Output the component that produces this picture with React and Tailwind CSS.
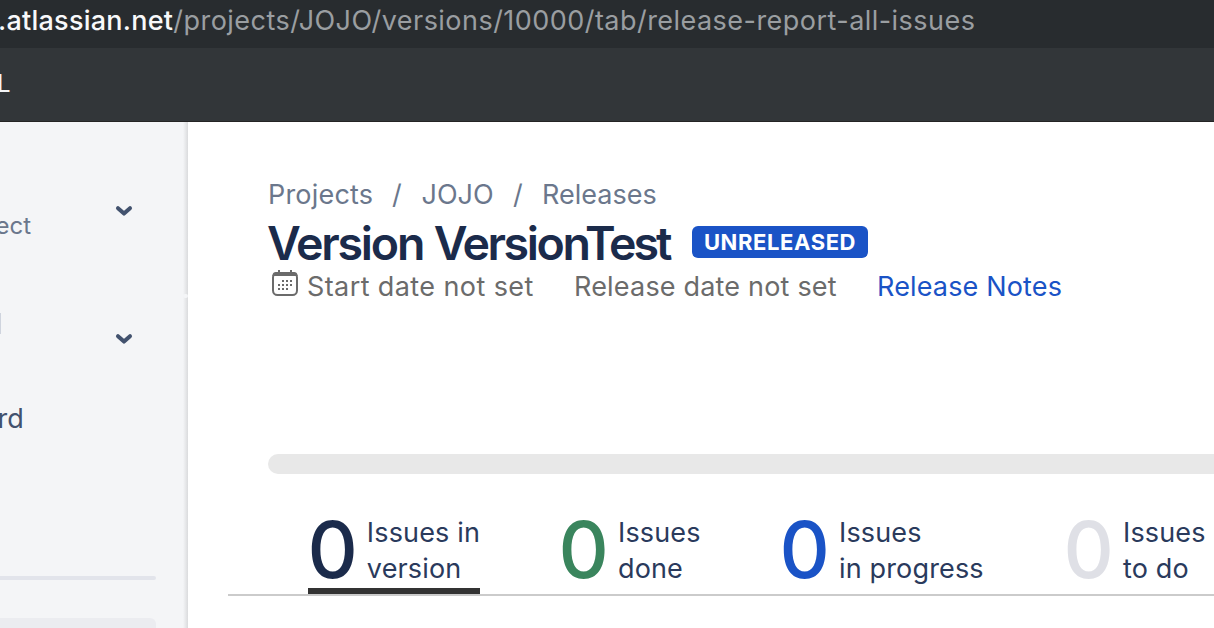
const ChevronDown = () => (
  <svg className="block h-[12px] w-[18px]" viewBox="0 0 18 12" fill="none">
    <path d="M3 3.2 9 8.6 15 3.2" stroke="#42526e" strokeWidth="4" strokeLinecap="round" strokeLinejoin="round" />
  </svg>
);

const CalendarIcon = () => (
  <svg className="block h-[28px] w-[28px] shrink-0" viewBox="0 0 28 28" fill="none">
    <rect x="2" y="4" width="24" height="22" rx="4.5" stroke="#6b6b6b" strokeWidth="2" />
    <path d="M1.5 7V6A3.5 3.5 0 0 1 5 3H23A3.5 3.5 0 0 1 26.5 6V7Z" fill="#6b6b6b" />
    <path d="M8 1V4M20 1V4" stroke="#6b6b6b" strokeWidth="2" />
    <path
      d="M11 12h2M15 12h2M19 12h2M7 16h2M11 16h2M15 16h2M19 16h2M7 20h2M11 20h2M15 20h2"
      stroke="#6b6b6b"
      strokeWidth="2"
    />
  </svg>
);

const tabs = [
  { first: "Issues in", second: "version", width: "w-[172px]", gap: "mr-[79px]", color: "text-[#1b2b4b]", active: true },
  { first: "Issues", second: "done", width: "w-[142px]", gap: "mr-[79px]", color: "text-[#3a855d]" },
  { first: "Issues", second: "in progress", width: "w-[204px]", gap: "mr-[80px]", color: "text-[#1a53c6]" },
  { first: "Issues", second: "to do", width: "w-[142px]", gap: "mr-0", color: "text-[#dfe0e6]" },
];

export default function App() {
  return (
    <div className="flex h-[628px] w-[1214px] flex-col overflow-hidden bg-white font-['Inter',sans-serif] text-[27px] leading-[36px] whitespace-nowrap">
      <div className="flex h-[48px] shrink-0 items-start bg-[#282c2f] pt-[3px]">
        <span className="-ml-[2px] font-[450] tracking-[0.25px] text-[#f8f9fa]">.atlassian.net</span>
        <span className="tracking-[0.46px] text-[#9a9ea1]">/projects/JOJO/versions/10000/tab/release-report-all-issues</span>
      </div>
      <header className="flex h-[74px] shrink-0 items-start border-b border-[#242424] bg-[#323639] pt-[19px]">
        <span className="-ml-[3px] text-[24px] leading-[34px] text-[#f4f5f7]">L</span>
      </header>

      <div className="flex min-h-0 flex-1">
        <aside className="relative flex w-[188px] shrink-0 flex-col overflow-hidden bg-[#f4f5f7]">
          <div className="flex h-[160px] shrink-0 items-start justify-between pr-[55px]">
            <span className="-ml-[4.5px] pt-[86px] text-[24px] text-[#6b778c]">ect</span>
            <div className="pt-[83px]"><ChevronDown /></div>
          </div>
          <div className="flex h-[114px] shrink-0 items-start justify-between pr-[55px]">
            <div className="mt-[31px] h-[21px] w-px bg-[#cfd4de]" />
            <div className="pt-[51px]"><ChevronDown /></div>
          </div>
          <div className="h-[180px] shrink-0">
            <span className="-ml-[2.5px] block pt-[5px] text-[#42526e]">rd</span>
          </div>
          <div className="h-[4px] w-[156px] shrink-0 rounded-r-[2px] bg-[#e2e4eb]" />
          <div className="mt-[38px] h-[30px] w-[156px] shrink-0 rounded-tr-[6px] bg-[#ebecf0]" />
          <div className="absolute inset-y-0 right-0 w-[5px] bg-linear-to-r from-[#f4f5f7] to-[#dadbdd]" />
          <div className="absolute top-[172px] right-0 h-[4px] w-[5px] rounded-[2px] bg-[#f4f5f7]" />
        </aside>

        <main className="flex min-w-0 flex-1 flex-col overflow-hidden pt-[55px]">
          <nav className="flex h-[35px] shrink-0 pl-[80px] text-[#6b778c]">
            <span className="w-[124px] tracking-[0.2px]">Projects</span>
            <span className="w-[29.5px]">/</span>
            <span className="w-[91.5px]">JOJO</span>
            <span className="w-[29px]">/</span>
            <span>Releases</span>
          </nav>
          <div className="flex h-[57px] shrink-0 items-start pl-[79px]">
            <h1 className="w-[425px] pt-[3px] text-[46.5px] leading-[56px] font-[590] tracking-[-2.2px] text-[#1b2b4b]">
              Version <span className="ml-[1px] tracking-[-2.4px]">Version</span>
              <span className="-ml-[3.5px] tracking-[-3px]">Test</span>
            </h1>
            <span className="mt-[14px] flex h-[32px] w-[176px] items-center justify-center rounded-[6px] bg-[#1a53c6] text-[22px] leading-[32px] font-bold tracking-[0.6px] text-white">
              UNRELEASED
            </span>
          </div>
          <div className="flex h-[36px] shrink-0 items-start pl-[83px] text-[#6b6b6b]">
            <CalendarIcon />
            <span className="ml-[8px] w-[267px] tracking-[0.4px]">Start date not set</span>
            <span className="w-[303px] tracking-[0.19px]">Release date not set</span>
            <a className="tracking-[0.15px] text-[#1a53c6]">Release Notes</a>
          </div>

          <div className="mt-[149px] ml-[80px] h-[20px] shrink-0 rounded-l-full bg-[#e8e8e8]" />

          <div className="mt-[40px] ml-[40px] flex h-[82px] shrink-0 border-b-2 border-[#cbcbcb] pl-[80px]">
            {tabs.map((t) => (
              <div key={t.second} className={`flex h-[80px] shrink-0 flex-col ${t.width} ${t.gap}`}>
                <div className="flex h-[74px]">
                  <span className={`-ml-[0.5px] w-[59.5px] text-[78px] leading-[72px] font-[450] ${t.color}`}>0</span>
                  <span className="pt-px tracking-[0.15px] text-[#2a3a5c]">
                    {t.first}
                    <br />
                    {t.second}
                  </span>
                </div>
                {t.active && <div className="h-[6px] bg-[#333333]" />}
              </div>
            ))}
          </div>
        </main>
      </div>
    </div>
  );
}
